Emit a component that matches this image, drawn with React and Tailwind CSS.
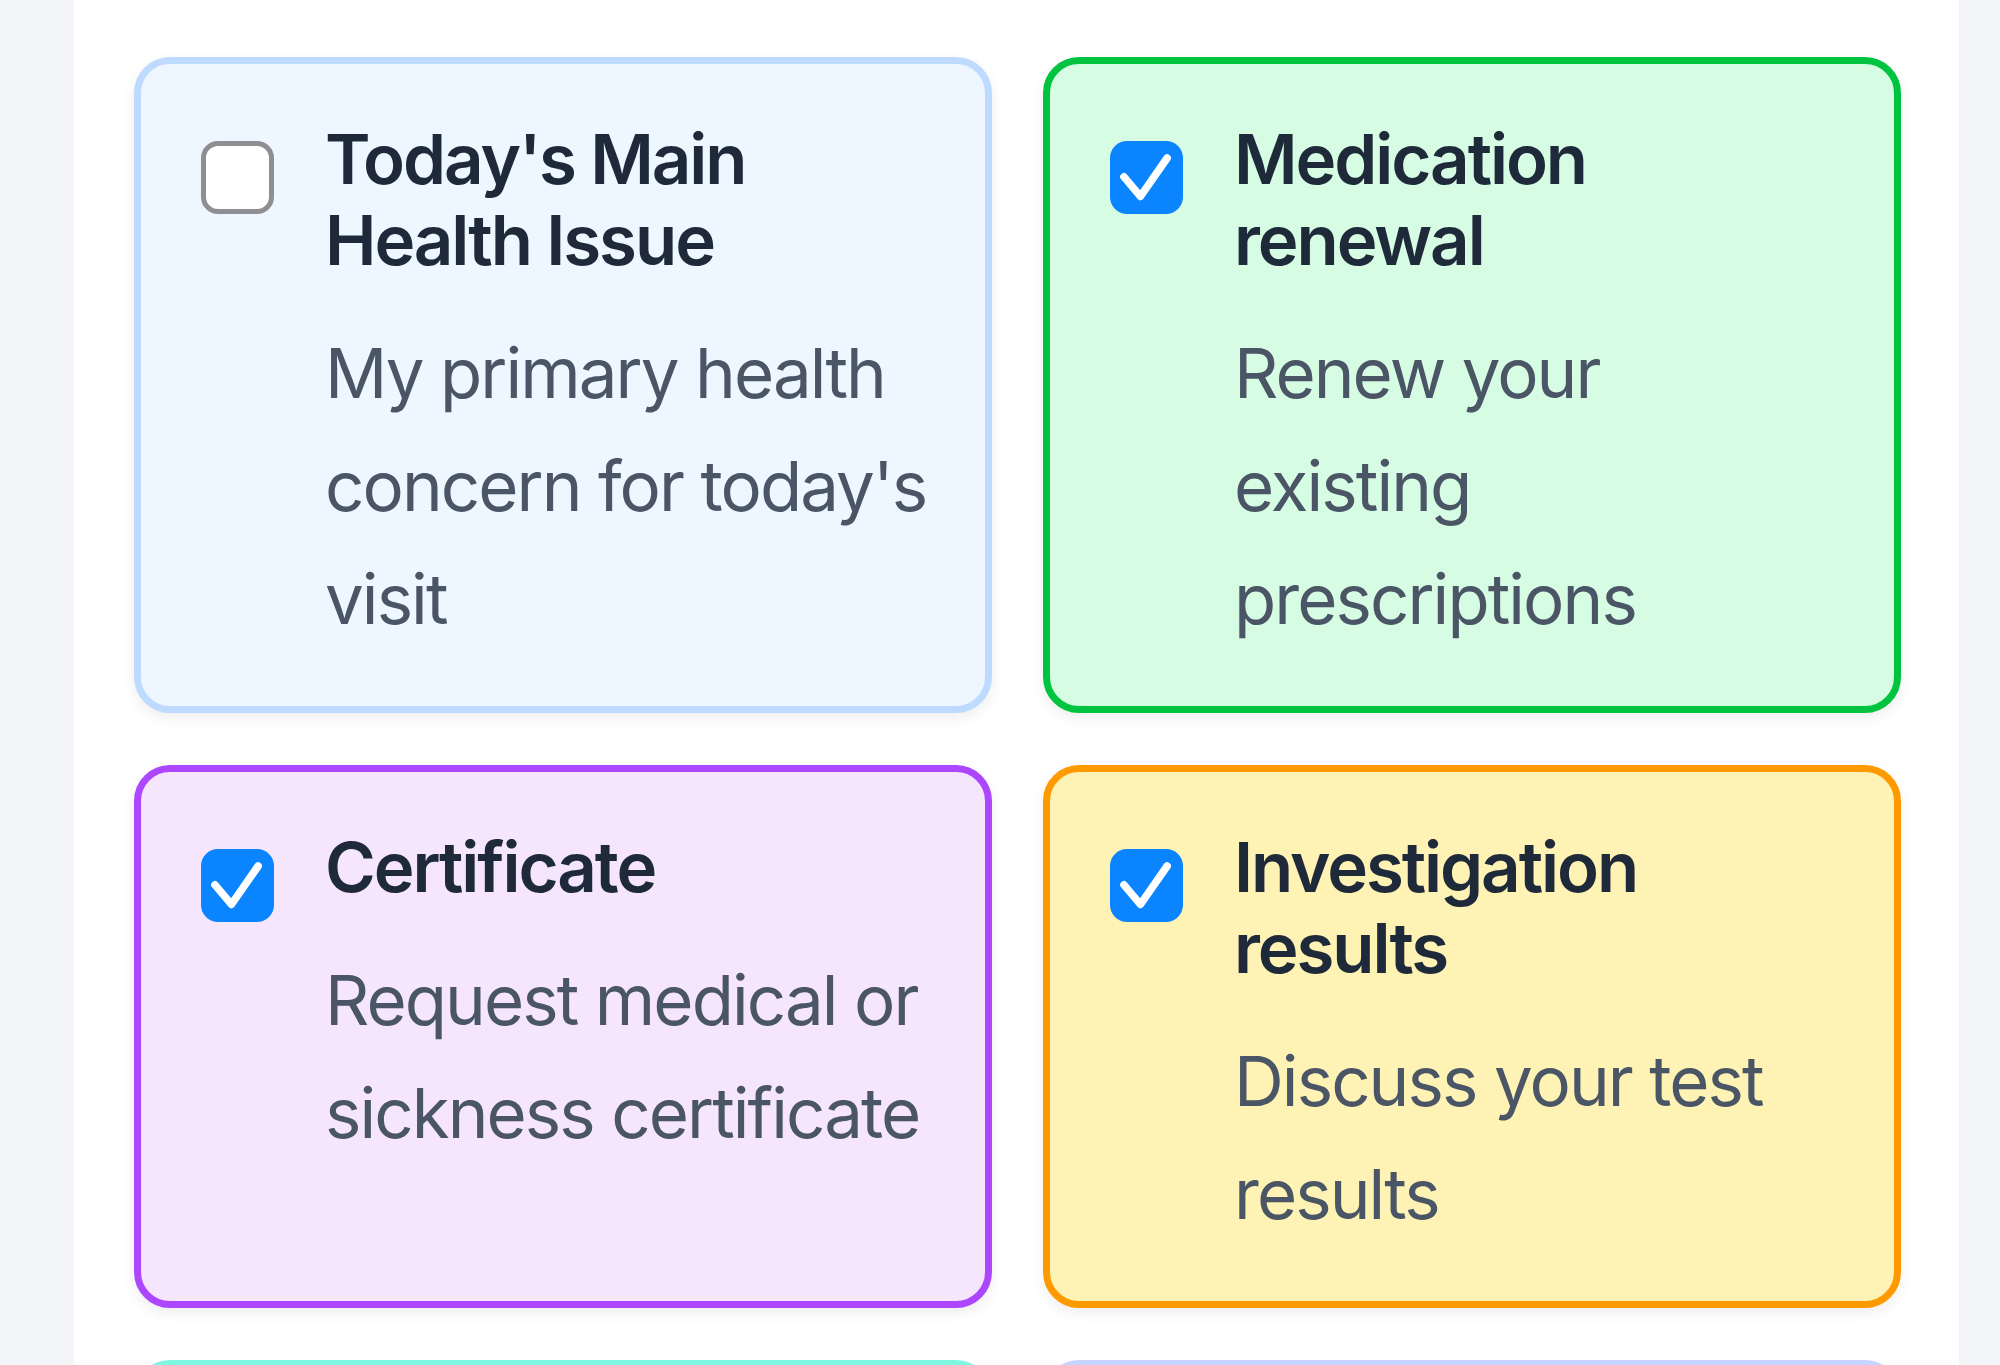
import React from "react";

const cards = [
  {
    title: ["Today's Main", "Health Issue"],
    desc: ["My primary health", "concern for today's", "visit"],
    checked: false,
    cls: "border-[#bedbff] bg-[#eef6ff]",
  },
  {
    title: ["Medication", "renewal"],
    desc: ["Renew your", "existing", "prescriptions"],
    checked: true,
    cls: "border-[#00c43f] bg-[#d6fde3]",
  },
  {
    title: ["Certificate"],
    desc: ["Request medical or", "sickness certificate"],
    checked: true,
    cls: "border-[#ad46ff] bg-[#f6e6fd]",
  },
  {
    title: ["Investigation", "results"],
    desc: ["Discuss your test", "results"],
    checked: true,
    cls: "border-[#fe9a00] bg-[#fef2b4]",
  },
];

function Checkbox({ checked }) {
  if (checked) {
    return (
      <div className="mt-[22px] flex h-[73px] w-[73px] shrink-0 items-center justify-center rounded-[17px] bg-[#0a84ff]">
        <svg viewBox="0 0 24 24" className="h-[73px] w-[73px]" fill="none">
          <path
            d="M4.6 11.8 L10 18.2 L18.8 5.6"
            stroke="white"
            strokeWidth="2.5"
            strokeLinecap="round"
            strokeLinejoin="round"
          />
        </svg>
      </div>
    );
  }
  return (
    <div className="mt-[22px] h-[73px] w-[73px] shrink-0 rounded-[17px] border-[5px] border-[#8e8e93] bg-white" />
  );
}

function Card({ card }) {
  return (
    <div
      className={`flex items-start gap-[51px] rounded-[36px] border-[7px] px-[60px] pt-[55px] pb-[50px] shadow-[0_5px_14px_rgba(0,0,0,0.07)] ${card.cls}`}
    >
      <Checkbox checked={card.checked} />
      <div className="min-w-0 whitespace-nowrap">
        <div className="text-[69px] font-semibold leading-[81px] tracking-[-0.03em] text-[#1e2939]">
          {card.title.map((t, i) => (
            <div key={i}>{t}</div>
          ))}
        </div>
        <div className="mt-[36px] text-[69px] font-normal leading-[113px] tracking-[-0.028em] text-[#4a5565]">
          {card.desc.map((t, i) => (
            <div key={i}>{t}</div>
          ))}
        </div>
      </div>
    </div>
  );
}

export default function App() {
  return (
    <div
      className="flex min-h-screen bg-[#f4f5f8] pl-[74px] pr-[41px]"
      style={{ fontFamily: "Inter, 'Noto Sans', sans-serif" }}
    >
      <div className="flex-1 bg-white pt-[57px] pl-[60px] pr-[58px] pb-[60px]">
        <div className="grid grid-cols-2 gap-x-[51px] gap-y-[52px]">
          {cards.map((c, i) => (
            <Card key={i} card={c} />
          ))}
          <div className="h-[400px] rounded-[36px] border-[7px] border-[#7ff6e2] bg-[#effdf9]" />
          <div className="h-[400px] rounded-[36px] border-[7px] border-[#c6d2ff] bg-[#eef2ff]" />
        </div>
      </div>
    </div>
  );
}
